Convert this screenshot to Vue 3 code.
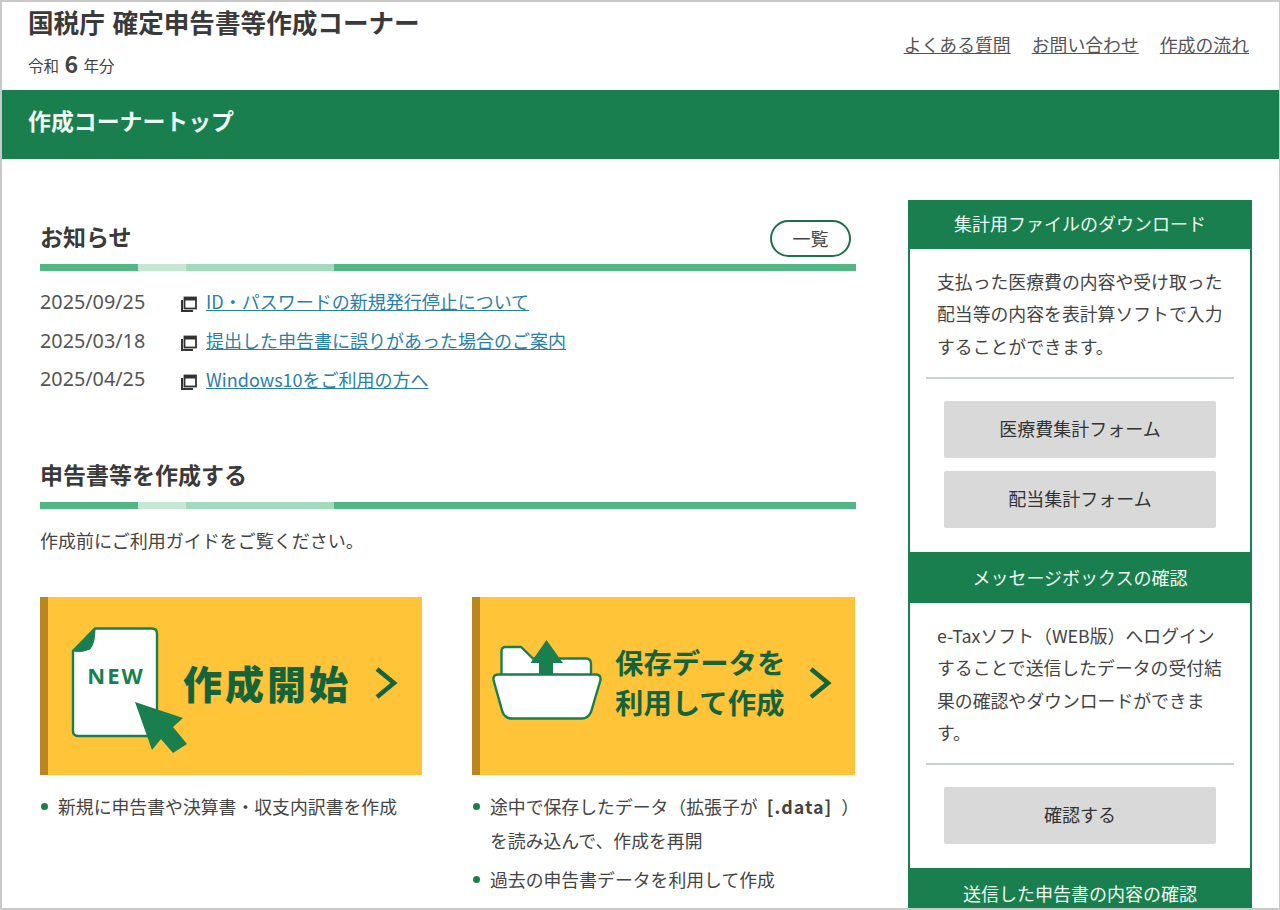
<template>
  <div class="page">
    <!-- ヘッダー -->
    <header class="header">
      <div class="header-left">
        <div class="site-title">国税庁 確定申告書等作成コーナー</div>
        <div class="year">令和 <b>6</b> 年分</div>
      </div>
      <nav class="header-nav">
        <a v-for="item in navItems" :key="item" href="javascript:;">{{ item }}</a>
      </nav>
    </header>

    <div class="band">作成コーナートップ</div>

    <div class="content">
      <main class="main">
        <!-- お知らせ -->
        <section class="notice">
          <div class="section-head">
            <h2>お知らせ</h2>
            <a href="javascript:;" class="btn-list">一覧</a>
          </div>
          <div class="stripe"><i></i><i></i><i></i><i></i></div>
          <ul class="news">
            <li v-for="n in news" :key="n.title">
              <span class="date">{{ n.date }}</span>
              <svg class="win-icon" width="16" height="16" viewBox="0 0 16 16">
                <path d="M1 4v11h11" fill="none" stroke="#333" stroke-width="2" />
                <rect x="3.5" y="1.5" width="11.5" height="11" fill="#fff" stroke="#333" stroke-width="1.8" />
                <rect x="3.5" y="1.5" width="11.5" height="3" fill="#333" />
              </svg>
              <a href="javascript:;">{{ n.title }}</a>
            </li>
          </ul>
        </section>

        <!-- 申告書等を作成する -->
        <section class="create">
          <div class="section-head head-plain">
            <h2>申告書等を作成する</h2>
          </div>
          <div class="stripe"><i></i><i></i><i></i><i></i></div>
          <p class="guide">作成前にご利用ガイドをご覧ください。</p>

          <div class="cards">
            <div class="card">
              <a href="javascript:;" class="banner">
                <svg class="art-new" width="120" height="130" viewBox="0 0 120 130">
                  <path d="M23 1.5H80Q85 1.5 85 6.5V104Q85 109 80 109H6Q1 109 1 104V24Z" fill="#fff" stroke="#1a7f4e" stroke-width="2.4" />
                  <path d="M23 1.5L1 24Q10 26 18 22Q23 16 23 1.5Z" fill="#1a7f4e" stroke="#1a7f4e" stroke-width="1" />
                  <text x="44" y="57" class="new-text">NEW</text>
                  <path d="M63 75L111 91L101 100L115 117L101 126L89 112L80 123Z" fill="#1a7f4e" />
                </svg>
                <span class="banner-label big">作成開始</span>
                <svg class="chevron" width="24" height="34" viewBox="0 0 24 34">
                  <path d="M3 3L20 17L3 31" fill="none" stroke="#14633a" stroke-width="4.5" />
                </svg>
              </a>
              <ul class="points">
                <li>新規に申告書や決算書・収支内訳書を作成</li>
              </ul>
            </div>

            <div class="card">
              <a href="javascript:;" class="banner banner-saved">
                <svg class="art-folder" width="112" height="84" viewBox="0 0 112 84">
                  <path d="M8.5 34V11Q8.5 7 12.5 7H28L40 18.5H93Q98 18.5 98 24V34" fill="#fff" stroke="#1a7f4e" stroke-width="2.4" />
                  <path d="M5 34.5H103Q108 34.5 107.5 40L98 72Q95 78.5 89 78.5H19Q12 78.5 9.5 72L.5 40Q0 34.5 5 34.5Z" fill="#fff" stroke="#1a7f4e" stroke-width="2.4" />
                  <path d="M53.5 0L70 23H60V34H46V23H37.5Z" fill="#1a7f4e" />
                </svg>
                <span class="banner-label">保存データを<br />利用して作成</span>
                <svg class="chevron" width="24" height="34" viewBox="0 0 24 34">
                  <path d="M3 3L20 17L3 31" fill="none" stroke="#14633a" stroke-width="4.5" />
                </svg>
              </a>
              <ul class="points">
                <li>途中で保存したデータ（拡張子が<b>[.data]</b>）<br />を読み込んで、作成を再開</li>
                <li>過去の申告書データを利用して作成</li>
              </ul>
            </div>
          </div>
        </section>
      </main>

      <!-- サイドバー -->
      <aside class="side">
        <div class="side-title first">集計用ファイルのダウンロード</div>
        <div class="side-body">
          <p>支払った医療費の内容や受け取った配当等の内容を表計算ソフトで入力することができます。</p>
          <hr />
          <div class="side-buttons">
            <a href="javascript:;">医療費集計フォーム</a>
            <a href="javascript:;">配当集計フォーム</a>
          </div>
        </div>
        <div class="side-title">メッセージボックスの確認</div>
        <div class="side-body">
          <p>e-Taxソフト（WEB版）へログインすることで送信したデータの受付結果の確認やダウンロードができます。</p>
          <hr />
          <div class="side-buttons">
            <a href="javascript:;">確認する</a>
          </div>
        </div>
        <div class="side-title">送信した申告書の内容の確認</div>
      </aside>
    </div>
  </div>
</template>

<script setup>
const navItems = ['よくある質問', 'お問い合わせ', '作成の流れ'];

const news = [
  { date: '2025/09/25', title: 'ID・パスワードの新規発行停止について' },
  { date: '2025/03/18', title: '提出した申告書に誤りがあった場合のご案内' },
  { date: '2025/04/25', title: 'Windows10をご利用の方へ' }
];
</script>

<style>
html, body {
  margin: 0;
  background: #fff;
}
</style>

<style scoped>
.page {
  box-sizing: border-box;
  width: 1280px;
  height: 910px;
  overflow: hidden;
  border: 2px solid #c9c9c9;
  border-right-width: 1px;
  font-family: "Noto Sans CJK JP", "Noto Sans", sans-serif;
  color: #333;
  background: #fff;
}

.header {
  height: 88px;
  display: flex;
  justify-content: space-between;
  padding: 0 30px 0 26px;
}

.site-title {
  margin-top: 4px;
  font-size: 25.6px;
  line-height: 32px;
  word-spacing: 2px;
  font-weight: 700;
  color: #3a3a3a;
}

.year {
  margin-top: 13px;
  font-size: 15.5px;
  line-height: 24px;
  color: #444;
}

.year b {
  font-size: 23px;
  margin: 0 2px;
  vertical-align: -1px;
}

.header-nav {
  display: flex;
  gap: 21px;
  padding-top: 29px;
  font-size: 17.85px;
  line-height: 26px;
}

.header-nav a {
  color: #555;
}

.band {
  height: 69px;
  line-height: 60px;
  padding-left: 26px;
  background: #1a7f4e;
  color: #eefaf3;
  font-size: 22.9px;
  font-weight: 700;
}

.content {
  display: flex;
  align-items: flex-start;
  padding: 41px 27px 0 38px;
  gap: 52px;
}

.main {
  width: 816px;
  flex: none;
}

.section-head {
  height: 64px;
  display: flex;
  justify-content: space-between;
  align-items: center;
  padding-right: 5px;
}

.section-head h2 {
  margin: 0;
  font-size: 23px;
  line-height: 30px;
  font-weight: 700;
  color: #3a3a3a;
  position: relative;
  top: 4px;
}

.head-plain {
  height: 56px;
}

.head-plain h2 {
  top: 0;
}

.btn-list {
  box-sizing: border-box;
  width: 81px;
  height: 37px;
  border: 2px solid #1f6f4a;
  border-radius: 19px;
  text-align: center;
  line-height: 33px;
  font-size: 18px;
  color: #444;
  text-decoration: none;
  position: relative;
  top: 6px;
}

.stripe {
  display: flex;
  height: 7px;
}

.stripe i:nth-child(1) { width: 98px; background: #52b784; }
.stripe i:nth-child(2) { width: 48px; background: #c5e7d5; }
.stripe i:nth-child(3) { width: 148px; background: #a2dabd; }
.stripe i:nth-child(4) { flex: 1; background: #52b784; }

.news {
  list-style: none;
  margin: 0;
  padding: 11px 0 0;
  height: 175px;
  box-sizing: border-box;
}

.news li {
  display: flex;
  align-items: center;
  height: 38.7px;
  font-size: 18px;
}

.news .date {
  width: 141px;
  flex: none;
  font-size: 19.8px;
  color: #555;
  font-family: "Noto Sans", "Noto Sans CJK JP", sans-serif;
}

.win-icon {
  flex: none;
  margin: 6px 9px 0 0;
}

.news a {
  color: #2a7fa8;
}

.guide {
  margin: 18px 0 0;
  font-size: 18px;
  line-height: 26px;
  color: #444;
}

.cards {
  display: grid;
  grid-template-columns: 382px 383px;
  gap: 50px;
  margin-top: 44px;
}

.banner {
  box-sizing: border-box;
  display: flex;
  align-items: center;
  height: 178px;
  background: #ffc438;
  border-left: 8px solid #b98620;
  text-decoration: none;
  padding: 0 24px;
  color: #14633a;
}

.art-new {
  flex: none;
  margin-top: 12px;
  overflow: visible;
}

.new-text {
  font-family: "Noto Sans", sans-serif;
  font-weight: 700;
  font-size: 22px;
  letter-spacing: 2px;
  fill: #1a7f4e;
  text-anchor: middle;
}

.banner-label {
  font-weight: 700;
  font-size: 28.4px;
  line-height: 40px;
  margin-bottom: 8px;
  color: #14633a;
}

.banner-label.big {
  font-size: 39px;
  font-weight: 900;
  letter-spacing: 3px;
  line-height: 50px;
  margin-left: -9px;
  margin-bottom: 8px;
  flex: none;
}

.chevron {
  flex: none;
  margin-left: auto;
  margin-bottom: 6px;
}

.banner-saved {
  padding-left: 13px;
  padding-right: 23px;
}

.art-folder {
  flex: none;
  margin-right: 10px;
  margin-bottom: 8px;
  overflow: visible;
}

.points {
  list-style: none;
  margin: 14px 0 0;
  padding: 0;
  font-size: 17.85px;
  line-height: 34px;
  color: #444;
}

.points b {
  letter-spacing: 1px;
  margin: 0 9px;
}

.points li {
  position: relative;
  padding-left: 18px;
  white-space: nowrap;
}

.points li + li {
  margin-top: 5px;
}

.points li::before {
  content: "";
  position: absolute;
  left: 1px;
  top: 14px;
  width: 7px;
  height: 7px;
  border-radius: 50%;
  background: #1a7f4e;
}

.side {
  width: 344px;
  flex: none;
  border-left: 2px solid #1a7f4e;
  border-right: 2px solid #1a7f4e;
  box-sizing: border-box;
}

.side-title {
  height: 51px;
  line-height: 50px;
  margin: 0 -2px;
  background: #1a7f4e;
  color: #eefaf3;
  text-align: center;
  font-size: 18px;
}

.side-title.first {
  height: 49px;
  line-height: 47px;
}

.side-body {
  padding: 16px 16px 24px;
}

.side-body p {
  margin: 0;
  padding: 0 8px 0 11px;
  font-size: 17.85px;
  line-height: 32.4px;
  color: #444;
}

.side-body hr {
  margin: 15px 0 21.6px;
  border: 0;
  height: 2px;
  background: #c8d2d2;
}

.side-buttons {
  display: flex;
  flex-direction: column;
  gap: 13px;
  padding: 0 18px;
}

.side-buttons a {
  height: 57px;
  line-height: 55px;
  text-align: center;
  background: #d9d9d9;
  border-radius: 2px;
  color: #333;
  font-size: 18px;
  text-decoration: none;
}
</style>
